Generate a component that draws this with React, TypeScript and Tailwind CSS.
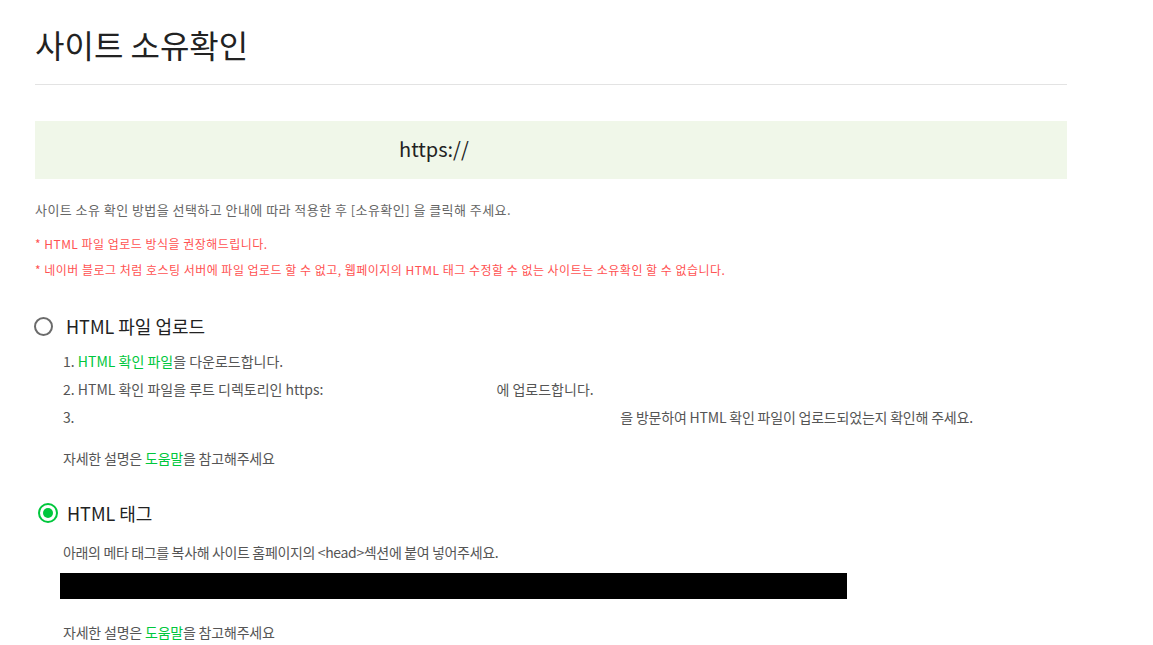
import React from "react";

const font = { fontFamily: '"Noto Sans CJK KR", "Noto Sans", sans-serif' };

export default function App() {
  return (
    <div className="min-h-[645px] bg-white pl-[35px] text-[#333]" style={font}>
      <div className="w-[1032px]">
        <h1 className="pt-[22px] pb-[18px] text-[32px] leading-[44px] font-normal text-[#222] border-b border-[#e3e3e3]">
          사이트 소유확인
        </h1>

        <div className="mt-[36px] h-[58px] bg-[#f0f7e9] flex items-center pl-[364px] pb-[2px]">
          <span className="text-[20px] text-[#222]">https://</span>
        </div>

        <p className="mt-[21px] text-[13px] leading-[20px] tracking-[0.45px] text-[#666]">
          사이트 소유 확인 방법을 선택하고 안내에 따라 적용한 후 [소유확인] 을 클릭해 주세요.
        </p>
        <div className="mt-[11px] text-[12px] leading-[26px] tracking-[0.48px] text-[#ff5252]">
          <p>* HTML 파일 업로드 방식을 권장해드립니다.</p>
          <p>* 네이버 블로그 처럼 호스팅 서버에 파일 업로드 할 수 없고, 웹페이지의 HTML 태그 수정할 수 없는 사이트는 소유확인 할 수 없습니다.</p>
        </div>

        <div className="mt-[28px] h-[30px] flex items-center">
          <span className="ml-[-1px] w-[19px] h-[19px] rounded-full border-2 border-[#6b6b6b] box-border" />
          <span className="ml-[13px] text-[18px] text-[#222]">HTML 파일 업로드</span>
        </div>

        <div className="pl-[28px] mt-[6px] text-[14px] leading-[28px] text-[#555]">
          <p>
            1. <span className="text-[#00c73c]">HTML 확인 파일</span>을 다운로드합니다.
          </p>
          <p className="whitespace-nowrap">
            2. HTML 확인 파일을 루트 디렉토리인 https:<span className="inline-block w-[173px]" />에 업로드합니다.
          </p>
          <p className="whitespace-nowrap tracking-[-0.2px]">
            3.<span className="inline-block w-[546px]" />을 방문하여 HTML 확인 파일이 업로드되었는지 확인해 주세요.
          </p>
          <p className="mt-[13px] tracking-[-0.2px]">
            자세한 설명은 <span className="text-[#00c73c]">도움말</span>을 참고해주세요
          </p>
        </div>

        <div className="mt-[26px] h-[30px] flex items-center">
          <span className="ml-[3px] w-[20px] h-[20px] rounded-full border-2 border-[#00c73c] box-border flex items-center justify-center">
            <span className="w-[10px] h-[10px] rounded-full bg-[#00c73c]" />
          </span>
          <span className="ml-[9px] text-[18px] text-[#222]">HTML 태그</span>
        </div>

        <div className="pl-[28px] mt-[10px] text-[14px] leading-[28px] text-[#555]">
          <p className="tracking-[-0.35px]">아래의 메타 태그를 복사해 사이트 홈페이지의 &lt;head&gt;섹션에 붙여 넣어주세요.</p>
          <div className="mt-[7px] ml-[-3px] w-[787px] h-[26px] bg-black" />
          <p className="mt-[19px] tracking-[-0.2px]">
            자세한 설명은 <span className="text-[#00c73c]">도움말</span>을 참고해주세요
          </p>
        </div>
      </div>
    </div>
  );
}
